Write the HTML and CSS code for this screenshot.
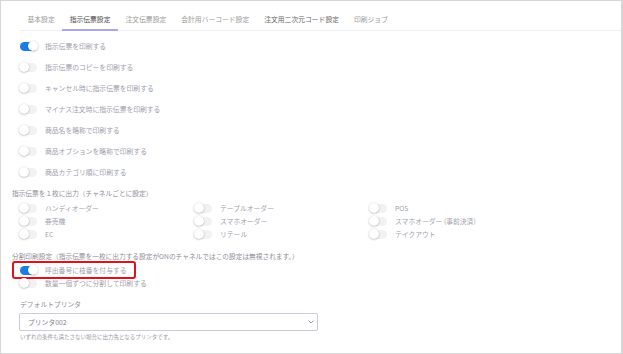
FILE: index.html
```
<!DOCTYPE html>
<html lang="ja">
<head>
<meta charset="utf-8">
<title>指示伝票設定</title>
<link rel="stylesheet" href="styles.css">
</head>
<body>
<div class="frame">
  <div class="tabs">
    <span class="tab">基本設定</span>
    <span class="tab active">指示伝票設定</span>
    <span class="tab">注文伝票設定</span>
    <span class="tab">会計用バーコード設定</span>
    <span class="tab hover">注文用二次元コード設定</span>
    <span class="tab">印刷ジョブ</span>
  </div>

  <div class="panel">
    <div class="list">
      <div class="row"><span class="sw on"></span><span class="label">指示伝票を印刷する</span></div>
      <div class="row"><span class="sw"></span><span class="label">指示伝票のコピーを印刷する</span></div>
      <div class="row"><span class="sw"></span><span class="label">キャンセル時に指示伝票を印刷する</span></div>
      <div class="row"><span class="sw"></span><span class="label">マイナス注文時に指示伝票を印刷する</span></div>
      <div class="row"><span class="sw"></span><span class="label">商品名を略称で印刷する</span></div>
      <div class="row"><span class="sw"></span><span class="label">商品オプションを略称で印刷する</span></div>
      <div class="row"><span class="sw"></span><span class="label">商品カテゴリ順に印刷する</span></div>
    </div>

    <div class="heading first">指示伝票を１枚に出力（チャネルごとに設定）</div>
    <div class="channels">
      <div class="row small"><span class="sw"></span><span class="label">ハンディオーダー</span></div>
      <div class="row small"><span class="sw"></span><span class="label">テーブルオーダー</span></div>
      <div class="row small"><span class="sw"></span><span class="label">POS</span></div>
      <div class="row small"><span class="sw"></span><span class="label">券売機</span></div>
      <div class="row small"><span class="sw"></span><span class="label">スマホオーダー</span></div>
      <div class="row small"><span class="sw"></span><span class="label">スマホオーダー (事前決済)</span></div>
      <div class="row small"><span class="sw"></span><span class="label">EC</span></div>
      <div class="row small"><span class="sw"></span><span class="label">リテール</span></div>
      <div class="row small"><span class="sw"></span><span class="label">テイクアウト</span></div>
    </div>

    <div class="heading second">分割印刷設定（指示伝票を一枚に出力する設定がONのチャネルではこの設定は無視されます。）</div>
    <div class="row small marked"><span class="sw on"></span><span class="label">呼出番号に枝番を付与する</span><span class="mark"></span></div>
    <div class="row small"><span class="sw"></span><span class="label">数量一個ずつに分割して印刷する</span></div>

    <div class="field-label">デフォルトプリンタ</div>
    <div class="select">
      <span>プリンタ002</span>
      <svg class="chev" width="6" height="4" viewBox="0 0 6 4"><path d="M0.6 0.7 L3 3 L5.4 0.7" fill="none" stroke="#888" stroke-width="0.9"/></svg>
    </div>
    <div class="help">いずれの条件も満たさない場合に出力先となるプリンタです。</div>
  </div>
</div>
</body>
</html>
```

FILE: styles.css
```
* { box-sizing: border-box; }
body { margin: 0; background: #fff; font-family: "Noto Sans CJK JP", "Noto Sans", sans-serif; }

.frame {
  width: 623px; height: 354px;
  border: 1px solid #d6d6d6;
  border-right-width: 2px;
  background: #fff;
  overflow: hidden;
}

/* tabs */
.tabs {
  display: flex;
  margin-left: 19px;
  border-bottom: 1px solid #eff0f7;
}
.tab {
  font-size: 6.8px; line-height: 10px;
  color: #9a9a9a;
  padding: 13px 7.5px 5px;
  border-bottom: 2px solid transparent;
  margin-bottom: -1px;
  white-space: nowrap;
}
.tab.active { color: #4a4a4a; border-bottom-color: #aaa5f0; }
.tab.hover { color: #666; }

/* body */
.panel { padding-left: 11px; }
.list { margin-top: 4.5px; }

.row {
  display: flex; align-items: center;
  height: 21px;
  margin-left: 8px;
  position: relative;
}
.row.small { height: 13px; }
.label { font-size: 6.8px; color: #a0a0ad; margin-left: 8px; white-space: nowrap; }

/* switch */
.sw {
  position: relative;
  width: 17px; height: 9px;
  border-radius: 5px;
  background: #f2f2f4;
  flex: none;
}
.sw::after {
  content: "";
  position: absolute; top: -0.5px; left: -1px;
  width: 10px; height: 10px;
  border-radius: 50%;
  background: #fff;
  box-shadow: 0 0.5px 2px rgba(0,0,0,0.32);
}
.sw.on { background: #1a7fe2; }
.sw.on::after { left: 8px; }

.heading { font-size: 6.7px; line-height: 10px; color: #8e8e98; white-space: nowrap; }
.heading.first { margin-top: 5.5px; margin-bottom: 3.5px; }
.heading.second { margin-top: 10.5px; margin-bottom: 2.5px; }

.channels {
  display: grid;
  grid-template-columns: 175px 175px 175px;
}

/* annotation box */
.mark {
  position: absolute;
  left: -8px; top: -2.5px;
  width: 124px; height: 18px;
  border: 2px solid #e3101b;
  border-radius: 3px;
}

.field-label {
  font-size: 6.8px; line-height: 10px; color: #8e8e98;
  margin: 9.5px 0 0 8px;
}
.select {
  display: flex; align-items: center; justify-content: space-between;
  width: 299px; height: 18px;
  margin: 4px 0 0 7px;
  padding: 0 3px 0 8px;
  border: 1px solid #cacadb;
  border-radius: 2px;
  font-size: 6.8px; color: #80808c;
}
.help {
  font-size: 5.5px; line-height: 8px; color: #9a9aa6;
  margin: 2px 0 0 8px;
}
```
